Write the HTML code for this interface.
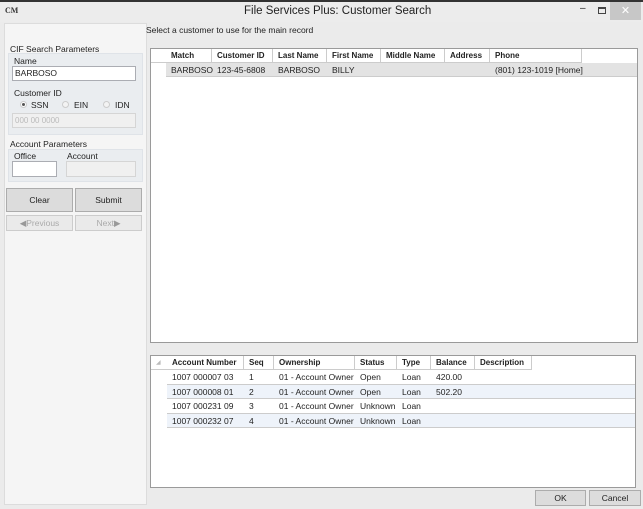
<!DOCTYPE html>
<html><head><style>
*{margin:0;padding:0;box-sizing:border-box}
body{width:643px;height:509px;background:#ebebeb;font-family:"Liberation Sans",sans-serif;font-size:8.5px;color:#222;position:relative;overflow:hidden}
.a{position:absolute}
.t{position:absolute;white-space:nowrap}
.inp{position:absolute;background:#fff;border:1px solid #abadb3}
.dis{position:absolute;background:#f0f0f0;border:1px solid #d5d5d5}
.btn{position:absolute;background:#dcdcdc;border:1px solid #acacac;text-align:center}
.grid{position:absolute;background:#fff;border:1px solid #9a9a9a}
.hd{position:absolute;top:0;height:14px;border-right:1px solid #ccc;border-bottom:1px solid #ccc;font-weight:bold;padding-left:5px;line-height:14px;font-size:8px}
.c{position:absolute;padding-left:5px;line-height:14px;white-space:nowrap}
</style></head><body>
<div class="a" style="left:0;top:0;width:643px;height:2px;background:#333"></div>
<div class="a" style="left:0;top:2px;width:643px;height:20px;background:#ececec"></div>
<div class="t" style="left:5px;top:6px;font-size:8px;font-weight:bold;font-family:'Liberation Serif',serif;color:#333">CM</div>
<div class="t" style="left:244px;top:5px;font-size:11.5px;color:#222">File Services Plus: Customer Search</div>
<div class="t" style="left:580px;top:3px;font-size:10px">–</div>
<div class="a" style="left:598px;top:7px;width:8px;height:7px;border:1px solid #444;border-top-width:2px"></div>
<div class="a" style="left:610px;top:2px;width:31px;height:18px;background:#c7c7c7;color:#fff;text-align:center;font-size:11px;line-height:18px">✕</div>

<div class="a" style="left:4px;top:23px;width:143px;height:482px;background:#f5f5f5;border:1px solid #dcdcdc"></div>
<div class="t" style="left:146px;top:25px">Select a customer to use for the main record</div>

<div class="t" style="left:10px;top:44px">CIF Search Parameters</div>
<div class="a" style="left:8px;top:53px;width:135px;height:82px;background:#eaedf0;border:1px solid #dfe3e8"></div>
<div class="t" style="left:14px;top:56px">Name</div>
<div class="inp" style="left:12px;top:66px;width:124px;height:15px;padding-left:2px;line-height:13px">BARBOSO</div>
<div class="t" style="left:14px;top:88px">Customer ID</div>
<div class="a" style="left:20px;top:101px;width:7px;height:7px;border-radius:50%;border:1px solid #ccc;background:#fff"><div class="a" style="left:1px;top:1px;width:3px;height:3px;border-radius:50%;background:#555"></div></div>
<div class="t" style="left:31px;top:100px">SSN</div>
<div class="a" style="left:62px;top:101px;width:7px;height:7px;border-radius:50%;border:1px solid #ccc;background:#f3f3f3"></div>
<div class="t" style="left:74px;top:100px">EIN</div>
<div class="a" style="left:103px;top:101px;width:7px;height:7px;border-radius:50%;border:1px solid #ccc;background:#f3f3f3"></div>
<div class="t" style="left:115px;top:100px">IDN</div>
<div class="dis" style="left:12px;top:113px;width:124px;height:15px;color:#bbb;line-height:13px;padding-left:2px;font-size:8px">000 00 0000</div>

<div class="t" style="left:10px;top:139px">Account Parameters</div>
<div class="a" style="left:8px;top:149px;width:135px;height:33px;background:#eaedf0;border:1px solid #dfe3e8"></div>
<div class="t" style="left:14px;top:151px">Office</div>
<div class="t" style="left:67px;top:151px">Account</div>
<div class="inp" style="left:12px;top:161px;width:45px;height:16px"></div>
<div class="dis" style="left:66px;top:161px;width:70px;height:16px"></div>

<div class="btn" style="left:6px;top:188px;width:67px;height:24px;line-height:22px">Clear</div>
<div class="btn" style="left:75px;top:188px;width:67px;height:24px;line-height:22px">Submit</div>
<div class="btn" style="left:6px;top:215px;width:67px;height:16px;line-height:14px;background:#eaeaea;border-color:#ccc;color:#aaa"><span style="color:#999">◀</span>Previous</div>
<div class="btn" style="left:75px;top:215px;width:67px;height:16px;line-height:14px;background:#eaeaea;border-color:#ccc;color:#aaa">Next<span style="color:#999">▶</span></div>

<div class="grid" style="left:150px;top:48px;width:488px;height:295px">
<div class="hd" style="left:0;width:15px;border-right:none"></div>
<div class="hd" style="left:15px;width:46px">Match</div>
<div class="hd" style="left:61px;width:61px">Customer ID</div>
<div class="hd" style="left:122px;width:54px">Last Name</div>
<div class="hd" style="left:176px;width:54px">First Name</div>
<div class="hd" style="left:230px;width:64px">Middle Name</div>
<div class="hd" style="left:294px;width:45px">Address</div>
<div class="hd" style="left:339px;width:92px">Phone</div>
<div class="a" style="left:15px;top:14px;width:471px;height:14px;background:#e3e3e3;border-bottom:1px solid #ccc"></div>
<div class="c" style="left:15px;top:14px">BARBOSO</div>
<div class="c" style="left:61px;top:14px">123-45-6808</div>
<div class="c" style="left:122px;top:14px">BARBOSO</div>
<div class="c" style="left:176px;top:14px">BILLY</div>
<div class="c" style="left:339px;top:14px">(801) 123-1019 [Home]</div>
</div>

<div class="grid" style="left:150px;top:355px;width:486px;height:133px">
<div class="hd" style="left:0;width:16px;border-right:none;color:#bbb;font-weight:normal;font-size:6px">◢</div>
<div class="hd" style="left:16px;width:77px">Account Number</div>
<div class="hd" style="left:93px;width:30px">Seq</div>
<div class="hd" style="left:123px;width:81px">Ownership</div>
<div class="hd" style="left:204px;width:42px">Status</div>
<div class="hd" style="left:246px;width:34px">Type</div>
<div class="hd" style="left:280px;width:44px">Balance</div>
<div class="hd" style="left:324px;width:57px">Description</div>
<div class="a" style="left:16px;top:14px;width:468px;height:15px;border-bottom:1px solid #ccc;background:#fff"></div>
<div class="a" style="left:16px;top:29px;width:468px;height:14px;border-bottom:1px solid #ccc;background:#eef3fa"></div>
<div class="a" style="left:16px;top:43px;width:468px;height:15px;border-bottom:1px solid #ccc;background:#fff"></div>
<div class="a" style="left:16px;top:58px;width:468px;height:14px;border-bottom:1px solid #ccc;background:#eef3fa"></div>
<div class="c" style="left:16px;top:14px">1007 000007 03</div><div class="c" style="left:93px;top:14px">1</div><div class="c" style="left:123px;top:14px">01 - Account Owner</div><div class="c" style="left:204px;top:14px">Open</div><div class="c" style="left:246px;top:14px">Loan</div><div class="c" style="left:280px;top:14px">420.00</div>
<div class="c" style="left:16px;top:29px">1007 000008 01</div><div class="c" style="left:93px;top:29px">2</div><div class="c" style="left:123px;top:29px">01 - Account Owner</div><div class="c" style="left:204px;top:29px">Open</div><div class="c" style="left:246px;top:29px">Loan</div><div class="c" style="left:280px;top:29px">502.20</div>
<div class="c" style="left:16px;top:43px">1007 000231 09</div><div class="c" style="left:93px;top:43px">3</div><div class="c" style="left:123px;top:43px">01 - Account Owner</div><div class="c" style="left:204px;top:43px">Unknown</div><div class="c" style="left:246px;top:43px">Loan</div>
<div class="c" style="left:16px;top:58px">1007 000232 07</div><div class="c" style="left:93px;top:58px">4</div><div class="c" style="left:123px;top:58px">01 - Account Owner</div><div class="c" style="left:204px;top:58px">Unknown</div><div class="c" style="left:246px;top:58px">Loan</div>
</div>

<div class="btn" style="left:535px;top:490px;width:51px;height:16px;line-height:14px">OK</div>
<div class="btn" style="left:589px;top:490px;width:52px;height:16px;line-height:14px">Cancel</div>
</body></html>
